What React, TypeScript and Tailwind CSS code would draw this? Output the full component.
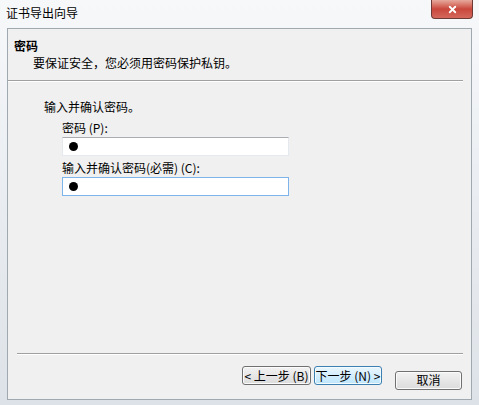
import { X } from "lucide-react";

const cjk = { fontFamily: '"Noto Sans CJK SC", "Noto Sans", sans-serif' };

function WinButton({ label, focused, width }: { label: string; focused?: boolean; width: string }) {
  return (
    <button
      className={`${width} h-[19px] rounded-[3px] border text-[12px] leading-none text-black ${
        focused
          ? "border-[#3c7fb1] bg-gradient-to-b from-[#eaf6fd] to-[#bee6fd] shadow-[inset_0_0_0_1px_#f4fbfe]"
          : "border-[#707070] bg-gradient-to-b from-[#f2f2f2] to-[#dcdcdc] shadow-[inset_0_0_0_1px_#fbfbfb]"
      }`}
      style={cjk}
    >
      {label}
    </button>
  );
}

function PasswordBox({ focused }: { focused?: boolean }) {
  return (
    <div
      className={`flex h-[19px] w-[227px] items-center border bg-white pl-[6px] ${
        focused ? "border-[#7eb4ea]" : "border-[#e3e9ef] border-t-[#abadb3]"
      }`}
    >
      <span className="h-[9px] w-[9px] rounded-full bg-black" />
    </div>
  );
}

export default function App() {
  return (
    <div
      className="flex h-[405px] w-[479px] flex-col overflow-hidden bg-gradient-to-b from-[#f7f8fa] via-[#e9edf1] to-[#dde2e8]"
      style={cjk}
    >
      {/* Title bar */}
      <div className="flex h-[28px] shrink-0 items-start justify-between pl-[6px]">
        <span className="pt-[5px] text-[12px] leading-[16px] text-black">证书导出向导</span>
        <div className="mr-[6px] flex h-[19px] w-[42px] items-center justify-center rounded-b-[4px] border border-t-0 border-[#6d3a36] bg-gradient-to-b from-[#e6a89d] via-[#c9463b] to-[#d4685c]">
          <X className="h-[11px] w-[11px] text-white" strokeWidth={4} />
        </div>
      </div>

      {/* Client area */}
      <div className="mx-[7px] flex h-[372px] shrink-0 flex-col border border-[#a0a8b0] bg-[#f0f0f0]">
        {/* Header */}
        <div className="flex flex-col pl-[6px] pt-[9px]">
          <span className="text-[12px] font-bold leading-[16px] text-black">密码</span>
          <span className="mt-[1px] pl-[19px] text-[12px] leading-[16px] text-black">
            要保证安全，您必须用密码保护私钥。
          </span>
        </div>
        <div className="mr-[8px] mt-[9px] h-[2px] border-t border-b border-t-[#a0a0a0] border-b-white" />

        {/* Body */}
        <div className="flex flex-1 flex-col pl-[36px] pt-[17px]">
          <span className="text-[12px] leading-[16px] text-black">输入并确认密码。</span>
          <div className="flex flex-col pl-[18px]">
            <span className="mt-[5px] text-[12px] leading-[16px] text-black">密码 (P):</span>
            <div className="mt-[1px]">
              <PasswordBox />
            </div>
            <span className="mt-[4px] text-[12px] leading-[16px] text-black">输入并确认密码(必需) (C):</span>
            <div className="mt-[1px]">
              <PasswordBox focused />
            </div>
          </div>
        </div>

        {/* Footer */}
        <div className="ml-[9px] mr-[8px] h-[2px] border-t border-b border-t-[#a0a0a0] border-b-white" />
        <div className="flex justify-end pb-[9px] pr-[9px] pt-[11px]">
          <div className="flex gap-[3px]">
            <WinButton label="< 上一步 (B)" width="w-[69px]" />
            <WinButton label="下一步 (N) >" width="w-[68px]" focused />
          </div>
          <div className="ml-[13px]">
            <WinButton label="取消" width="w-[67px]" />
          </div>
        </div>
      </div>
    </div>
  );
}
